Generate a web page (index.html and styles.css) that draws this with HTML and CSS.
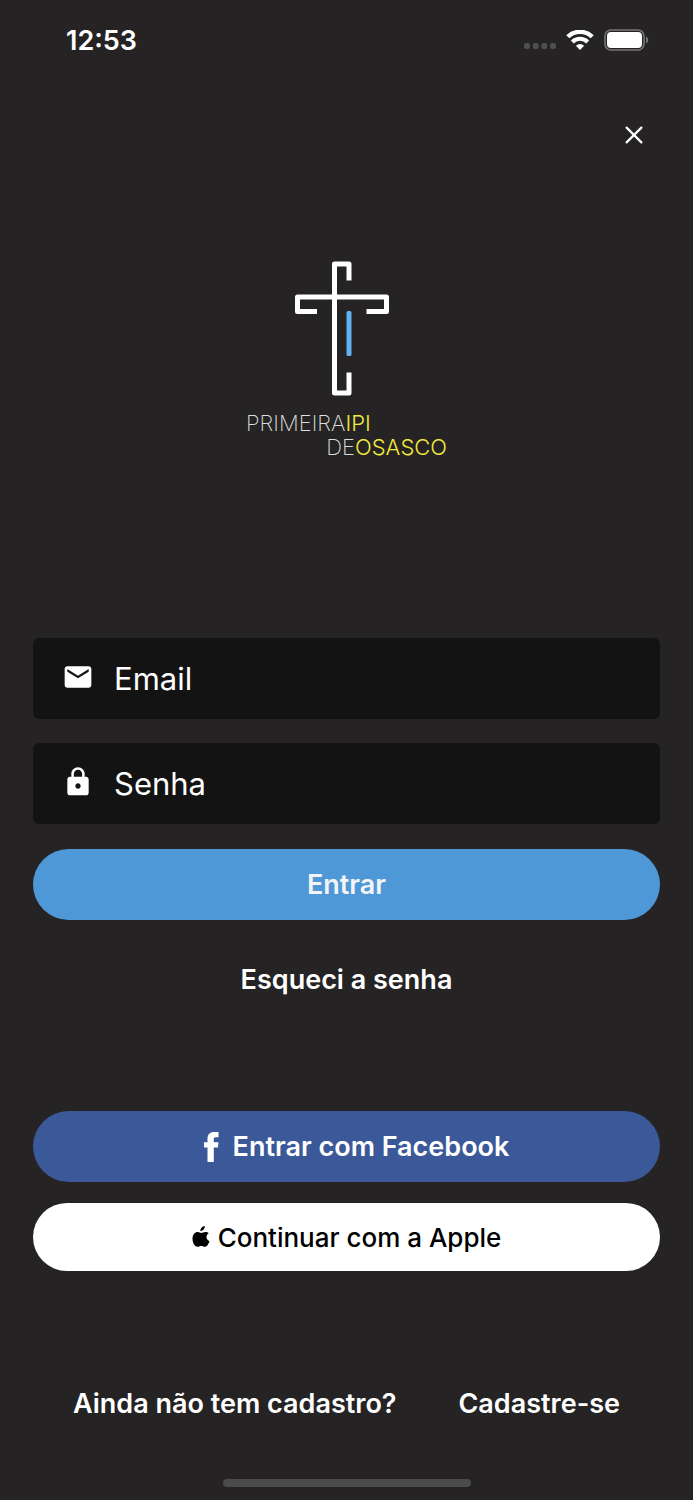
FILE: index.html
```html
<!DOCTYPE html>
<html lang="pt-BR">
<head>
    <meta charset="UTF-8">
    <meta name="viewport" content="width=device-width, initial-scale=1.0">
    <title>Entrar</title>
    <link rel="stylesheet" href="styles.css">
</head>
<body>
    <div class="screen">
        <header class="status-bar">
            <span class="time">12:53</span>
            <div class="status-icons">
                <svg class="signal" width="32" height="6" viewBox="0 0 32 6" fill="#504f50">
                    <rect x="0" y="0" width="6" height="6" rx="2"/>
                    <rect x="8.7" y="0" width="6" height="6" rx="2"/>
                    <rect x="17.3" y="0" width="6" height="6" rx="2"/>
                    <rect x="26" y="0" width="6" height="6" rx="2"/>
                </svg>
                <svg class="wifi" width="28" height="20" viewBox="0 0 28 20" fill="none" stroke="#fff">
                    <path d="M1.8 6.800a17.400 17.400 0 0 1 24.400 0" stroke-width="4.400"/>
                    <path d="M6.300 11.900a11 11 0 0 1 15.400 0" stroke-width="4.200"/>
                    <path d="M9.900 15.800a5.800 5.800 0 0 1 8.200 0L14 20z" fill="#fff" stroke="none"/>
                </svg>
                <svg class="battery" width="45" height="22" viewBox="0 0 45 22">
                    <rect x="1" y="1" width="39" height="20" rx="6" fill="none" stroke="#777677" stroke-width="1.6"/>
                    <rect x="3" y="3" width="35" height="16" rx="4" fill="#fff"/>
                    <path d="M42 7.5c3 1.5 3 5.500 0 7z" fill="#777677"/>
                </svg>
            </div>
        </header>

        <button class="close" type="button" aria-label="Fechar">
            <svg width="18" height="18" viewBox="0 0 18 18" stroke="#fff" stroke-width="2.2" stroke-linecap="round">
                <path d="M1.600 1.600l14.800 14.800M16.400 1.600L1.600 16.400"/>
            </svg>
        </button>

        <div class="logo">
            <svg class="cross" width="96" height="136" viewBox="0 0 96 136" fill="none" stroke-width="5" stroke-linejoin="round">
                <path d="M55 19.500V3H40.500V132H55V111.500" stroke="#fff"/>
                <path d="M23 50.500H3.500V36H92.500V50.500H72.500" stroke="#fff"/>
                <rect x="52.500" y="50" width="5" height="45" rx="1.500" fill="#62b0ef"/>
            </svg>
            <div class="logo-name">
                <div>PRIMEIRA<span>IPI</span></div>
                <div class="logo-city">DE<span>OSASCO</span></div>
            </div>
        </div>

        <form class="login-form">
            <label class="field" for="email">
                <svg width="32" height="32" viewBox="0 0 24 24" fill="#fff" role="img" aria-label="Email">
                    <path d="M20 4H4c-1.100 0-2 .9-2 2v12c0 1.100.9 2 2 2h16c1.100 0 2-.9 2-2V6c0-1.100-.9-2-2-2zm0 4l-8 5-8-5V6l8 5 8-5v2z"/>
                </svg>
                <input type="email" id="email" name="email" placeholder="Email">
            </label>
            <label class="field" for="password">
                <svg width="32" height="32" viewBox="0 0 24 24" fill="#fff" role="img" aria-label="Senha">
                    <path d="M18 8h-1V6c0-2.760-2.240-5-5-5S7 3.240 7 6v2H6c-1.100 0-2 .9-2 2v10c0 1.100.9 2 2 2h12c1.100 0 2-.9 2-2V10c0-1.100-.9-2-2-2zm-6 9c-1.100 0-2-.9-2-2s.9-2 2-2 2 .9 2 2-.9 2-2 2zm3.100-9H8.900V6c0-1.710 1.390-3.100 3.100-3.100s3.100 1.390 3.100 3.100v2z"/>
                </svg>
                <input type="password" id="password" name="password" placeholder="Senha">
            </label>
            <button class="btn btn-login" type="submit">Entrar</button>
        </form>

        <a class="forgot" href="#">Esqueci a senha</a>

        <div class="social">
            <button class="btn btn-facebook" type="button">
                <svg width="15" height="30" viewBox="0 0 15 30" fill="#fff">
                    <path d="M3.500 30V15.500H0V10.200H3.500V7C3.500 2.300 6 0 10.300 0H14.500V5.200H11.800C10 5.200 9.800 6 9.800 7.500V10.200H14.500L13.900 15.500H9.800V30z"/>
                </svg>
                Entrar com Facebook
            </button>
            <button class="btn btn-apple" type="button">
                <svg width="18" height="22" viewBox="0 0 18 22" fill="#000">
                    <path d="M12.800 0c.2 2.700-2 5-4.400 5C8.200 2.500 10.300.3 12.800 0zM16.800 7.300c-3.300 2-2.900 6.400.7 7.900-.7 2.300-2.600 5.600-4.600 5.600-1.400 0-2-.8-3.700-.8s-2.400.8-3.700.8C2.600 20.800.5 16.500.5 12.800c0-4 2.500-6.700 5.300-6.700 1.500 0 2.500.9 3.500.9 1.100 0 2.200-1 4-1 1.400 0 2.700.5 3.500 1.300z"/>
                </svg>
                Continuar com a Apple
            </button>
        </div>

        <footer class="signup">
            <span>Ainda não tem cadastro?</span>
            <a href="#">Cadastre-se</a>
        </footer>

        <div class="home-indicator"></div>
    </div>
</body>
</html>
```
FILE: styles.css
```css
* { box-sizing: border-box; }
body { margin: 0; background-color: #252324; color: #fff; font-family: Inter, "Liberation Sans", sans-serif; font-weight: 600; }
a { color: #fff; text-decoration: none; }
button { border: none; padding: 0; font-family: inherit; font-weight: inherit; cursor: pointer; }
svg { display: block; flex: none; }
.screen { display: flex; flex-direction: column; min-height: 100vh; padding: 0 33px 13px; }

/* status bar */
.status-bar { display: flex; justify-content: space-between; align-items: center; height: 80px; padding: 0 11px 0 33px; }
.time { font-size: 27px; }
.status-icons { display: flex; align-items: center; gap: 10px; }
.signal { margin-top: 12px; }

.close { align-self: flex-end; display: flex; align-items: center; justify-content: center; width: 52px; height: 52px; margin-top: 29px; background: none; }

/* logo */
.logo { display: flex; flex-direction: column; align-items: center; margin-top: 100px; }
.cross { margin-right: 10px; }
.logo-name { margin-top: 14px; color: #ddd; font-size: 22px; font-weight: 200; line-height: 24px; width: 201px; }
.logo-name span { color: #f2e93f; font-weight: 300; }
.logo-city { text-align: right; }

/* form */
.login-form { display: flex; flex-direction: column; gap: 24px; margin-top: 179px; }
.field { display: flex; align-items: center; gap: 20px; height: 81px; padding: 0 29px; background-color: #131313; border-radius: 6px; }
.field svg { margin-bottom: 4px; }
.field input { flex: 1; min-width: 0; padding: 0; border: none; outline: none; background: none; color: #fff; font-family: inherit; font-size: 31px; }
.field input::placeholder { color: #fff; opacity: 1; }
.btn { display: flex; align-items: center; justify-content: center; width: 100%; height: 71px; border-radius: 36px; color: #fff; font-size: 27px; }
.btn-login { margin-top: 1px; background-color: #4f98d8; color: #f4f4f4; }
.forgot { align-self: center; margin-top: 43px; font-size: 27px; line-height: 34px; }

.social { display: flex; flex-direction: column; gap: 21px; margin-top: 114px; }
.btn-facebook { gap: 14px; padding-left: 20px; background-color: #3b5998; }
.btn-apple { gap: 8px; height: 68px; background-color: #fff; color: #000; font-size: 26px; font-weight: 500; }

.signup { display: flex; justify-content: space-between; margin-top: 116px; padding: 0 40px; font-size: 27px; line-height: 34px; }
.home-indicator { align-self: center; width: 248px; height: 8px; margin-top: auto; border-radius: 4px; background-color: #4b4b4b; }
```
